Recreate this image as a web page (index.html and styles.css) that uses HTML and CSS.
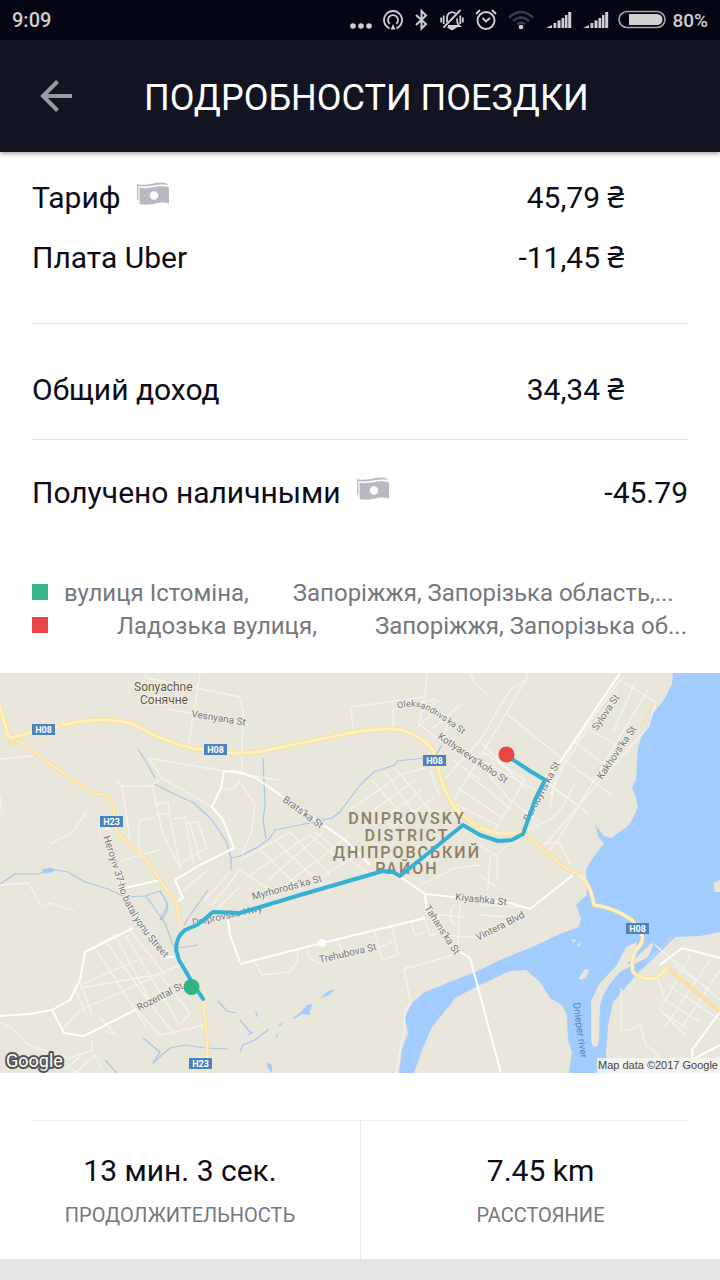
FILE: index.html
```html
<!DOCTYPE html>
<html lang="ru">
<head>
<meta charset="utf-8">
<meta name="viewport" content="width=device-width, initial-scale=1">
<title>Подробности поездки</title>
<link rel="stylesheet" href="styles.css">
</head>
<body>
<div class="status">
  <time class="status-time">9:09</time>
  <div class="status-icons">
    <svg class="ic-dots" width="22" height="22" viewBox="0 0 22 22" fill="#d0d0d4"><circle cx="3" cy="17" r="2.8"/><circle cx="11" cy="17" r="2.8"/><circle cx="19" cy="17" r="2.8"/></svg>
    <svg class="ic-cast" width="20" height="22" viewBox="0 0 20 22" fill="none" stroke="#d0d0d4" stroke-width="1.8"><path d="M6.500 19.300A9 9 0 1 1 13.500 19.300M6.700 14.800A5 5 0 1 1 13.300 14.800"/><path d="M10 15l2.400 5.500H7.600z" fill="#d0d0d4" stroke="none"/></svg>
    <svg class="ic-bt" width="13" height="22" viewBox="0 0 13 22" fill="none" stroke="#d0d0d4" stroke-width="2"><path d="M1 6l10 9-4.500 4.500V2L11 6.500 1 16"/></svg>
    <svg class="ic-bell" width="24" height="22" viewBox="0 0 24 22" fill="none" stroke="#d0d0d4" stroke-width="1.800"><path d="M8 17h11.500c-2.500-2-2.500-4-2.500-7.500M15.500 4.500C12 1.500 7 4 7 9v4M20.500 1L3.500 18.500M1.200 8.500v5M3.700 6.500v8.500M20.300 6.500v8.500M22.800 8.500v5"/><path d="M9.500 19h5l-2.500 1.500z" fill="#d0d0d4"/></svg>
    <svg class="ic-alarm" width="22" height="22" viewBox="0 0 22 22" fill="none" stroke="#d0d0d4" stroke-width="1.900"><circle cx="11" cy="11.500" r="8.500"/><path d="M1 5l4-4M21 5l-4-4M7.500 9l3.500 3.500L15 9"/></svg>
    <svg class="ic-wifi" width="26" height="22" viewBox="0 0 26 22" fill="none" stroke="#3d3e4a" stroke-width="2.400"><path d="M1 8.500q12-11 24 0M5 12q8-7 16 0M9 15.500q4-3.500 8 0"/><circle cx="13" cy="18" r="2.300" fill="#d0d0d4" stroke="none"/></svg>
    <svg class="ic-sig" width="26" height="22" viewBox="0 0 26 22" fill="#d0d0d4"><path d="M0 19l6-3v3zM7.500 14h2.800v5H7.500zM11.500 11.500h3v7.500h-3zM15.500 9h2.800v10h-2.800zM19 6h2.500v13H19zM22.200 3h3v16h-3z"/></svg>
    <svg class="ic-sig last" width="26" height="22" viewBox="0 0 26 22" fill="#d0d0d4"><path d="M0 19l6-3v3zM7.500 14h2.800v5H7.500zM11.500 11.500h3v7.500h-3zM15.500 9h2.800v10h-2.800zM19 6h2.500v13H19zM22.200 3h3v16h-3z"/></svg>
    <svg class="ic-bat" width="48" height="22" viewBox="0 0 48 22"><rect x="1" y="2.500" width="46" height="16" rx="8" fill="none" stroke="#a6a7ad" stroke-width="1.600"/><path d="M11 5h28a5.500 5.500 0 0 1 0 11H11z" fill="#d0d0d0"/></svg>
    <span class="status-pct">80%</span>
  </div>
</div>
<header class="bar">
  <button class="back" type="button" aria-label="Назад">
    <svg width="34" height="34" viewBox="0 0 34 34" fill="none" stroke="#9a9ba2" stroke-width="4"><path d="M33 17H4M18.500 2.500L4 17l14.500 14.500"/></svg>
  </button>
  <h1>ПОДРОБНОСТИ ПОЕЗДКИ</h1>
</header>
<main>
  <section class="money">
    <dl class="group fares">
      <div class="row"><dt>Тариф <svg class="cash" width="33" height="24" viewBox="0 0 33 24"><path d="M0 2C10 5 18-1 29 1L31 3C20 1 12 6 1.300 4V18.500L0 17.500z" fill="#b8b9c1"/><path d="M2.500 5.500C13 8 20 2 32 5.500V21.500C22 18 14 25 2.500 22z" fill="#b8b9c1"/><circle cx="17" cy="13.500" r="4.200" fill="#fff"/></svg></dt><dd class="inset">45,79 <span class="cur">₴</span></dd></div>
      <div class="row"><dt>Плата Uber</dt><dd class="inset">-11,45 <span class="cur">₴</span></dd></div>
    </dl>
    <dl class="group total">
      <div class="row"><dt>Общий доход</dt><dd class="inset">34,34 <span class="cur">₴</span></dd></div>
    </dl>
    <dl class="group received">
      <div class="row"><dt>Получено наличными <svg class="cash" width="33" height="24" viewBox="0 0 33 24"><path d="M0 2C10 5 18-1 29 1L31 3C20 1 12 6 1.300 4V18.500L0 17.500z" fill="#b8b9c1"/><path d="M2.500 5.500C13 8 20 2 32 5.500V21.500C22 18 14 25 2.500 22z" fill="#b8b9c1"/><circle cx="17" cy="13.500" r="4.200" fill="#fff"/></svg></dt><dd>-45.79</dd></div>
    </dl>
  </section>
  <ul class="places">
    <li><i class="mark from"></i><span class="street">вулиця Істоміна,</span><span class="city">Запоріжжя, Запорізька область,...</span></li>
    <li><i class="mark to"></i><span class="street shifted">Ладозька вулиця,</span><span class="city far">Запоріжжя, Запорізька об...</span></li>
  </ul>
  <svg class="map" viewBox="0 673 720 400" role="img" aria-label="Карта поездки">
    <rect y="673" width="720" height="400" fill="#e9e6db"/>
    <g class="water">
      <path d="M673 673L672 684 665 698 660 705 650 717 646 730 641 738 638 748 637 765 636 780 632 787 636 798 638 807 632 820 628 826 618 833 612 838 604 836 595 825 599 838 604 843 590 862 586 870 587 895 576 905 581 918 579 927 560 934 530 948 500 960 480 970 450 982 425 992 412 1003 405 1017 408 1033 402 1050 399 1073H414L422 1050 432 1027 450 1005 455 998 470 990 480 985 510 971 526 970 540 982 550 998 562 1005 567 1015 568 1040 572 1052 569 1073H609L606 1055 608 1025 613 1002 625 988 650 958 672 937 700 936 720 932V673z"/>
      <path d="M293 1018l8-6 6-7 6-1-3 6 0 5-8-1-8 5zM320 998l8-7 7-2-5 6zM278 1025l6-3-4 4zM255 1011l3 3-1 4zM275 1037l4-5-2 6zM267 1062l5 3 0 8-5-6zM250 1031l4 1-6 4z"/>
      <path d="M42 869l9-1 4 3-10 3z"/>
    </g>
    <g fill="#e9e6db">
      <path d="M637 942L626 947 617 965 600 983 591 1001V1040Q592 1047 595 1047 598 1047 599 1041L600 1005Q603 990 620 972L648 957 654 944 650 943 636 956z"/>
      <path d="M579 978l6-9 4 1-3 8-6 2zM571 940l5-1-2 4zM576 946l6-4-2 4zM713 883l7-3v12h-5z"/>
    </g>
    <g fill="none" stroke="#a9c6e6" stroke-width="1.200" stroke-linejoin="round">
      <path d="M138 749L148 765 155 778M155 784L172 793 194 803 212 820 226 841 231 858 240 856 258 847 270 838 275 830 305 824 332 818 340 812 360 785 374 772 395 765 397 761 425 758M442 745L435 757M263 758L265 805 263 820 266 839M231 858L231 870"/>
      <path d="M0 884L15 874 38 874 50 869 68 872 85 882 108 889 125 897 145 896 160 891 168 905 160 920M146 896L165 923 173 945 180 955M160 892Q174 908 161 920M208 890L188 918 184 925M178 948L198 945M143 1038L160 1052 153 1063 170 1048 185 1045 205 1048 228 1049M105 1060L117 1073M218 1001L227 1011 236 1013M240 1052L243 1045 255 1040 269 1029M240 1020L250 1032"/>
      <path d="M640 970L675 936M628 964L650 943" stroke="#a3ccff" stroke-width="2"/>
    </g>
    <g class="minor">
      <path d="M0 759L33 756M0 795L2 815M87 811L72 833 50 844M145 673L147 678 240 697M200 673L189 742M167 709L240 722M148 758L240 774 280 780M149 759L162 778 212 807M162 778L150 786 122 786 117 780M122 786L130 840M152 785L163 835 180 868M155 804L168 802 170 813 156 815M139 820L155 818M139 820V858M120 862L140 855 160 850M169 813L181 870M173 819L185 817 193 863M185 823L198 822 207 848 183 862M190 823L200 860M212 768L216 768M221 788Q235 793 240 780"/>
      <path d="M240 698L245 720 242 733 242 770M242 785L255 805 252 830 242 855M353 732L351 707 425 697 427 673M393 727V710L435 699M470 673L475 683 488 695M442 699L422 710 418 728M439 707L420 725 446 745M450 715L442 743M460 705L433 728M372 780L402 815M385 772L415 815M395 768L430 810M350 810L402 774 425 768M360 820L415 780M375 825L422 790M388 830L435 797M430 770L440 797M453 760L480 780M460 748L535 790M444 780L480 740 510 690 526 680M240 860L290 832 330 875M250 875L310 835 345 865M268 880L325 830M285 885L350 835M300 890L365 850M240 870L270 890M260 850L300 888M275 840L330 893M315 832L370 875"/>
      <path d="M527 673L527 678 483 752 453 802M483 752L525 780 495 830M507 714L560 757 612 795M482 743L527 790M480 765L510 800 540 822M467 773L512 810M458 788L502 818M450 802L498 825M620 680L656 702M617 692L590 730 614 743M635 682L613 733M648 690L555 845 545 853M656 702L648 727 592 790 545 845M620 680L575 742 605 765M574 742L555 780 550 810M592 722L565 764 550 795M549 785L575 804M545 780L590 815M523 832L550 820 560 810 575 784M543 843L560 843 571 865"/>
      <path d="M480 845L495 855 521 836M490 855L488 890M497 855V880M0 885L28 883 42 907 50 903 75 911M85 952L115 935 155 1010M95 948L145 1025M107 943L155 1010 175 1035M125 935L180 1025 190 1013M130 930L165 975M80 985L145 957M80 988L155 975 180 965M62 1030L80 1010 160 975M73 985L88 1018M80 983L92 1015M100 1018L115 1034 105 1031M135 1008L160 1035 205 1025M160 975L190 1013M170 970L178 966M0 1022L12 1028 28 1045 70 1058 92 1050 92 1040M92 1050L102 1070M65 1070L85 1052M75 1073L95 1055M58 1065L80 1073M180 893L208 870M205 900L230 872M212 905L240 870M218 908L240 887"/>
      <path d="M255 962L262 975 290 972 298 960 297 950M308 950Q308 960 320 963M337 940L342 950M374 930L382 960 398 955 392 927M378 948L397 940M411 922L415 935 425 932M423 915L430 936 438 932M410 965L404 969 411 1003 405 1010 404 1030 396 1073M404 969L453 955M420 885L455 868 480 865M440 913Q435 925 444 935L480 938M455 905Q445 915 455 925M460 905L458 945M440 915L465 917M480 905L520 907M480 915L520 918M480 875L500 890"/>
      <path d="M621 988V1030H630L640 1025 646 1045 658 1055 665 1068M658 980L665 1000 660 1010 685 1035M690 955L666 1000M710 960L665 1027M720 970L680 1030M674 965L710 990M668 985L720 1020M655 945L720 1000M665 1000L700 1022M663 1013L690 1030"/>
    </g>
    <g class="major">
      <path d="M221 788L212 807 223 820 234 848 200 865 175 880 183 898 176 902M221 788L224 771 240 772 256 778 345 840 370 865M620 673L558 765 545 780M0 1016L30 1014 52 1010 70 1000 80 980 85 952 133 928M52 1010L64 1033 84 1036 135 1010M125 888L160 880M106 830L110 823M228 920L230 935 240 962M240 964L322 943 425 918M399 876L425 894 510 903M425 894L427 915M457 950L470 958 480 995 501 1073M510 903L530 909 573 875M693 1073L692 1050 720 1012M660 965L682 948 720 958M692 1060L720 1045"/>
      <circle cx="322" cy="943" r="3" fill="#fff"/>
      <path d="M163 957H174"/>
    </g>
    <g fill="none" stroke-linejoin="round">
      <g stroke="#f9dfa0" stroke-width="5">
        <path d="M0 705L4 722 9 738 22 735 50 728Q80 720 100 720T133 724L150 733Q180 748 205 750 230 755 258 752L350 733Q385 727 403 730 424 738 433 750L438 768Q444 793 455 808 470 824 485 830 505 837 523 832"/>
        <path d="M523 832L566 869 580 875Q590 883 594 905 613 907 632 920" stroke-width="4"/>
        <path d="M18 740L50 764 92 793 108 795 114 808 113 825 122 838 145 858 155 873 165 887 176 902 181 928M203 998L207 1040V1073" stroke-width="3.500"/>
        <path d="M632 920L642 935Q644 943 636 950 630 962 633 972 643 981 656 978L668 968 720 1012" stroke-width="4"/>
        <circle cx="12" cy="740" r="4" stroke-width="3"/>
        <path d="M655 702L640 728" stroke-width="1.500"/>
      </g>
      <path d="M0 705L4 722 9 738 22 735 50 728Q80 720 100 720T133 724L150 733Q180 748 205 750 230 755 258 752L350 733Q385 727 403 730 424 738 433 750L438 768Q444 793 455 808 470 824 485 830 505 837 523 832M580 875Q590 883 594 905 613 907 632 920L642 935Q644 943 636 950 630 962 633 972 643 981 656 978L668 968" stroke="#fff0bd" stroke-width="3"/>
      <path d="M18 740L50 764 92 793 108 795 114 808 113 825 122 838 145 858 155 873 165 887 176 902 181 928M203 998L207 1040V1073M523 832L566 869 580 875" stroke="#fff0bd" stroke-width="1.500"/>
    </g>
    <g class="roads">
      <text x="134" y="691" class="town">Sonyachne</text>
      <text x="140" y="704" class="town">Сонячне</text>
      <text transform="translate(191 717) rotate(9)">Vesnyana St</text>
      <path id="p-ole" d="M398 709Q415 703 430 712T466 737" fill="none"/>
      <text class="tight"><textPath href="#p-ole">Oleksandrivs'ka St</textPath></text>
      <text transform="translate(437 738) rotate(34)">Kotlyarevs'koho St</text>
      <text transform="translate(597 731) rotate(-56)">Sylova St</text>
      <text transform="translate(602 780) rotate(-56)">Kakhovs'ka St</text>
      <text transform="translate(529 822) rotate(-62)">Borodyns'ka St</text>
      <text transform="translate(282 801) rotate(36)">Brats'ka St</text>
      <path id="p-her" d="M103 837Q112 863 119 888 128 920 170 964" fill="none"/>
      <text><textPath href="#p-her">Heroyiv 37-ho batal'yonu Street</textPath></text>
      <text transform="translate(253 900) rotate(-15)">Myrhorods'ka St</text>
      <text transform="translate(193 926) rotate(-12)">Dniprovske Hwy</text>
      <text transform="translate(320 963) rotate(-13)">Trehubova St</text>
      <text transform="translate(424 908) rotate(57)">Tahans'ka St</text>
      <text transform="translate(455 900) rotate(6)">Kiyashka St</text>
      <text transform="translate(478 941) rotate(-27)">Vintera Blvd</text>
      <text transform="translate(139 1011) rotate(-27)">Rozental St</text>
      <text transform="translate(573 1003) rotate(82)" class="river">Dnieper river</text>
    </g>
    <g class="district">
      <text x="407" y="824">DNIPROVSKY</text>
      <text x="407" y="841">DISTRICT</text>
      <text x="407" y="858">ДНІПРОВСЬКИЙ</text>
      <text x="407" y="874">РАЙОН</text>
    </g>
    <path d="M506 755L530 771 545 780 535 800 523 834 512 840 498 841 480 835 463 825 400 876 393 872 383 871 300 895 240 913 213 912 206 918 197 925 185 930Q176 937 176 950L179 960 192 982 203 999" fill="none" stroke="#35b1d5" stroke-width="4" stroke-linejoin="round" stroke-linecap="round"/>
    <circle cx="506.500" cy="754.500" r="8" fill="#e84545"/>
    <circle cx="191.500" cy="987" r="8" fill="#33b284"/>
    <g class="shields">
      <rect x="32" y="724" width="23" height="11"/><text x="43.500" y="733">H08</text>
      <rect x="204" y="744" width="23" height="11"/><text x="215.500" y="753">H08</text>
      <rect x="423" y="755" width="23" height="11"/><text x="434.500" y="764">H08</text>
      <rect x="100" y="816" width="23" height="11"/><text x="111.500" y="825">H23</text>
      <rect x="626" y="923" width="23" height="11"/><text x="637.500" y="932">H08</text>
      <rect x="189" y="1058" width="23" height="11"/><text x="200.500" y="1067">H23</text>
    </g>
    <text x="6" y="1067" class="logo">Google</text>
    <rect x="597" y="1058" width="123" height="15" fill="#f5f5f3" fill-opacity=".85"/>
    <text x="718" y="1069" class="credit">Map data ©2017 Google</text>
  </svg>
  <div class="rule"></div>
  <dl class="stats">
    <div class="stat"><dd>13 мин. 3 сек.</dd><dt>ПРОДОЛЖИТЕЛЬНОСТЬ</dt></div>
    <div class="stat"><dd>7.45 km</dd><dt>РАССТОЯНИЕ</dt></div>
  </dl>
</main>
</body>
</html>
```
FILE: styles.css
```css
* { box-sizing: border-box; margin: 0; padding: 0; }
body { background: #e4e5e6; color: #0b0c18; font-family: Roboto, "Liberation Sans", sans-serif; }
svg { display: block; flex: none; }

.status { display: flex; justify-content: space-between; align-items: center; height: 40px; padding: 0 12px; background: #050613; color: #d0d0d4; font-size: 20px; font-weight: 500; }
.status-icons { display: flex; align-items: center; }
.status-pct { font-size: 19px; }
.ic-dots, .ic-bell, .ic-alarm { margin-right: 11px; }
.ic-cast, .ic-bt, .ic-wifi { margin-right: 12px; }
.ic-sig { margin-right: 11px; }
.ic-sig.last { margin-right: 9px; }
.ic-bat { margin-right: 6px; }

.bar { position: relative; display: flex; align-items: center; height: 112px; padding-left: 39px; background: #121422; color: #fff; box-shadow: 0 1px 5px rgba(0, 0, 0, .45); }
.back { display: block; background: none; border: 0; cursor: pointer; }
h1 { margin-left: 71px; padding-top: 4px; font-size: 36px; font-weight: 400; line-height: 44px; }

main { background: #fff; }
.money { padding: 0 32px; font-size: 30px; line-height: 36px; }
.group { display: flex; flex-direction: column; gap: 24px; }
.fares { padding: 28px 0 47px; border-bottom: 1px solid #e5e5e7; }
.total { padding: 48px 0 31px; border-bottom: 1px solid #e5e5e7; }
.received { padding: 35px 0 0; }
.row { display: flex; justify-content: space-between; }
.row dt { display: flex; gap: 16px; }
.cash { margin-top: 2px; }
.inset { padding-right: 64px; }
.cur { font-family: "Noto Sans", Roboto, sans-serif; line-height: 1; }

.places { list-style: none; padding: 66px 32px 30px; color: #76777d; font-size: 24px; line-height: 33px; }
.places li { display: flex; align-items: center; white-space: nowrap; }
.mark { flex: none; width: 16px; height: 16px; margin: 0 16px 4px 0; }
.from { background: #38b389; }
.to { background: #e84545; }
.shifted { margin-left: 53px; }
.city { margin-left: 44px; }
.far { margin-left: 58px; }

.map { width: 100%; height: auto; }
.water { fill: #a3ccff; }
.minor { fill: none; stroke: #f6f4ed; stroke-width: 1.3; }
.major { fill: none; stroke: #fff; stroke-width: 2; stroke-linejoin: round; }
.roads { fill: #76767a; font-size: 10px; stroke: #f2f0e8; stroke-width: 2; paint-order: stroke; }
.roads path { stroke: none; }
.roads .tight { font-size: 9px; }
.roads .town { fill: #625a47; font-size: 12px; }
.roads .river { fill: #5583bd; stroke: none; font-size: 10px; }
.district { fill: #8c8162; font-size: 16px; font-weight: 500; text-anchor: middle; letter-spacing: 2px; }
.shields rect { fill: #4a83bf; }
.shields text { fill: #fff; font-size: 9px; font-weight: 700; text-anchor: middle; }
.logo { fill: #fff; stroke: #555; stroke-width: 4; stroke-linejoin: round; paint-order: stroke; font-size: 18px; }
.credit { fill: #444; font-family: "Liberation Sans", sans-serif; font-size: 11px; text-anchor: end; }

.rule { height: 1px; margin: 47px 32px 0; background: #eeeeef; }
.stats { display: grid; grid-template-columns: 1fr 1fr; text-align: center; }
.stat { display: flex; flex-direction: column; gap: 12px; padding: 32px 0 30px; }
.stat + .stat { border-left: 1px solid #e9e9eb; }
.stat dd { font-size: 30px; line-height: 36px; }
.stat dt { color: #76777d; font-size: 20px; line-height: 28px; }
```
